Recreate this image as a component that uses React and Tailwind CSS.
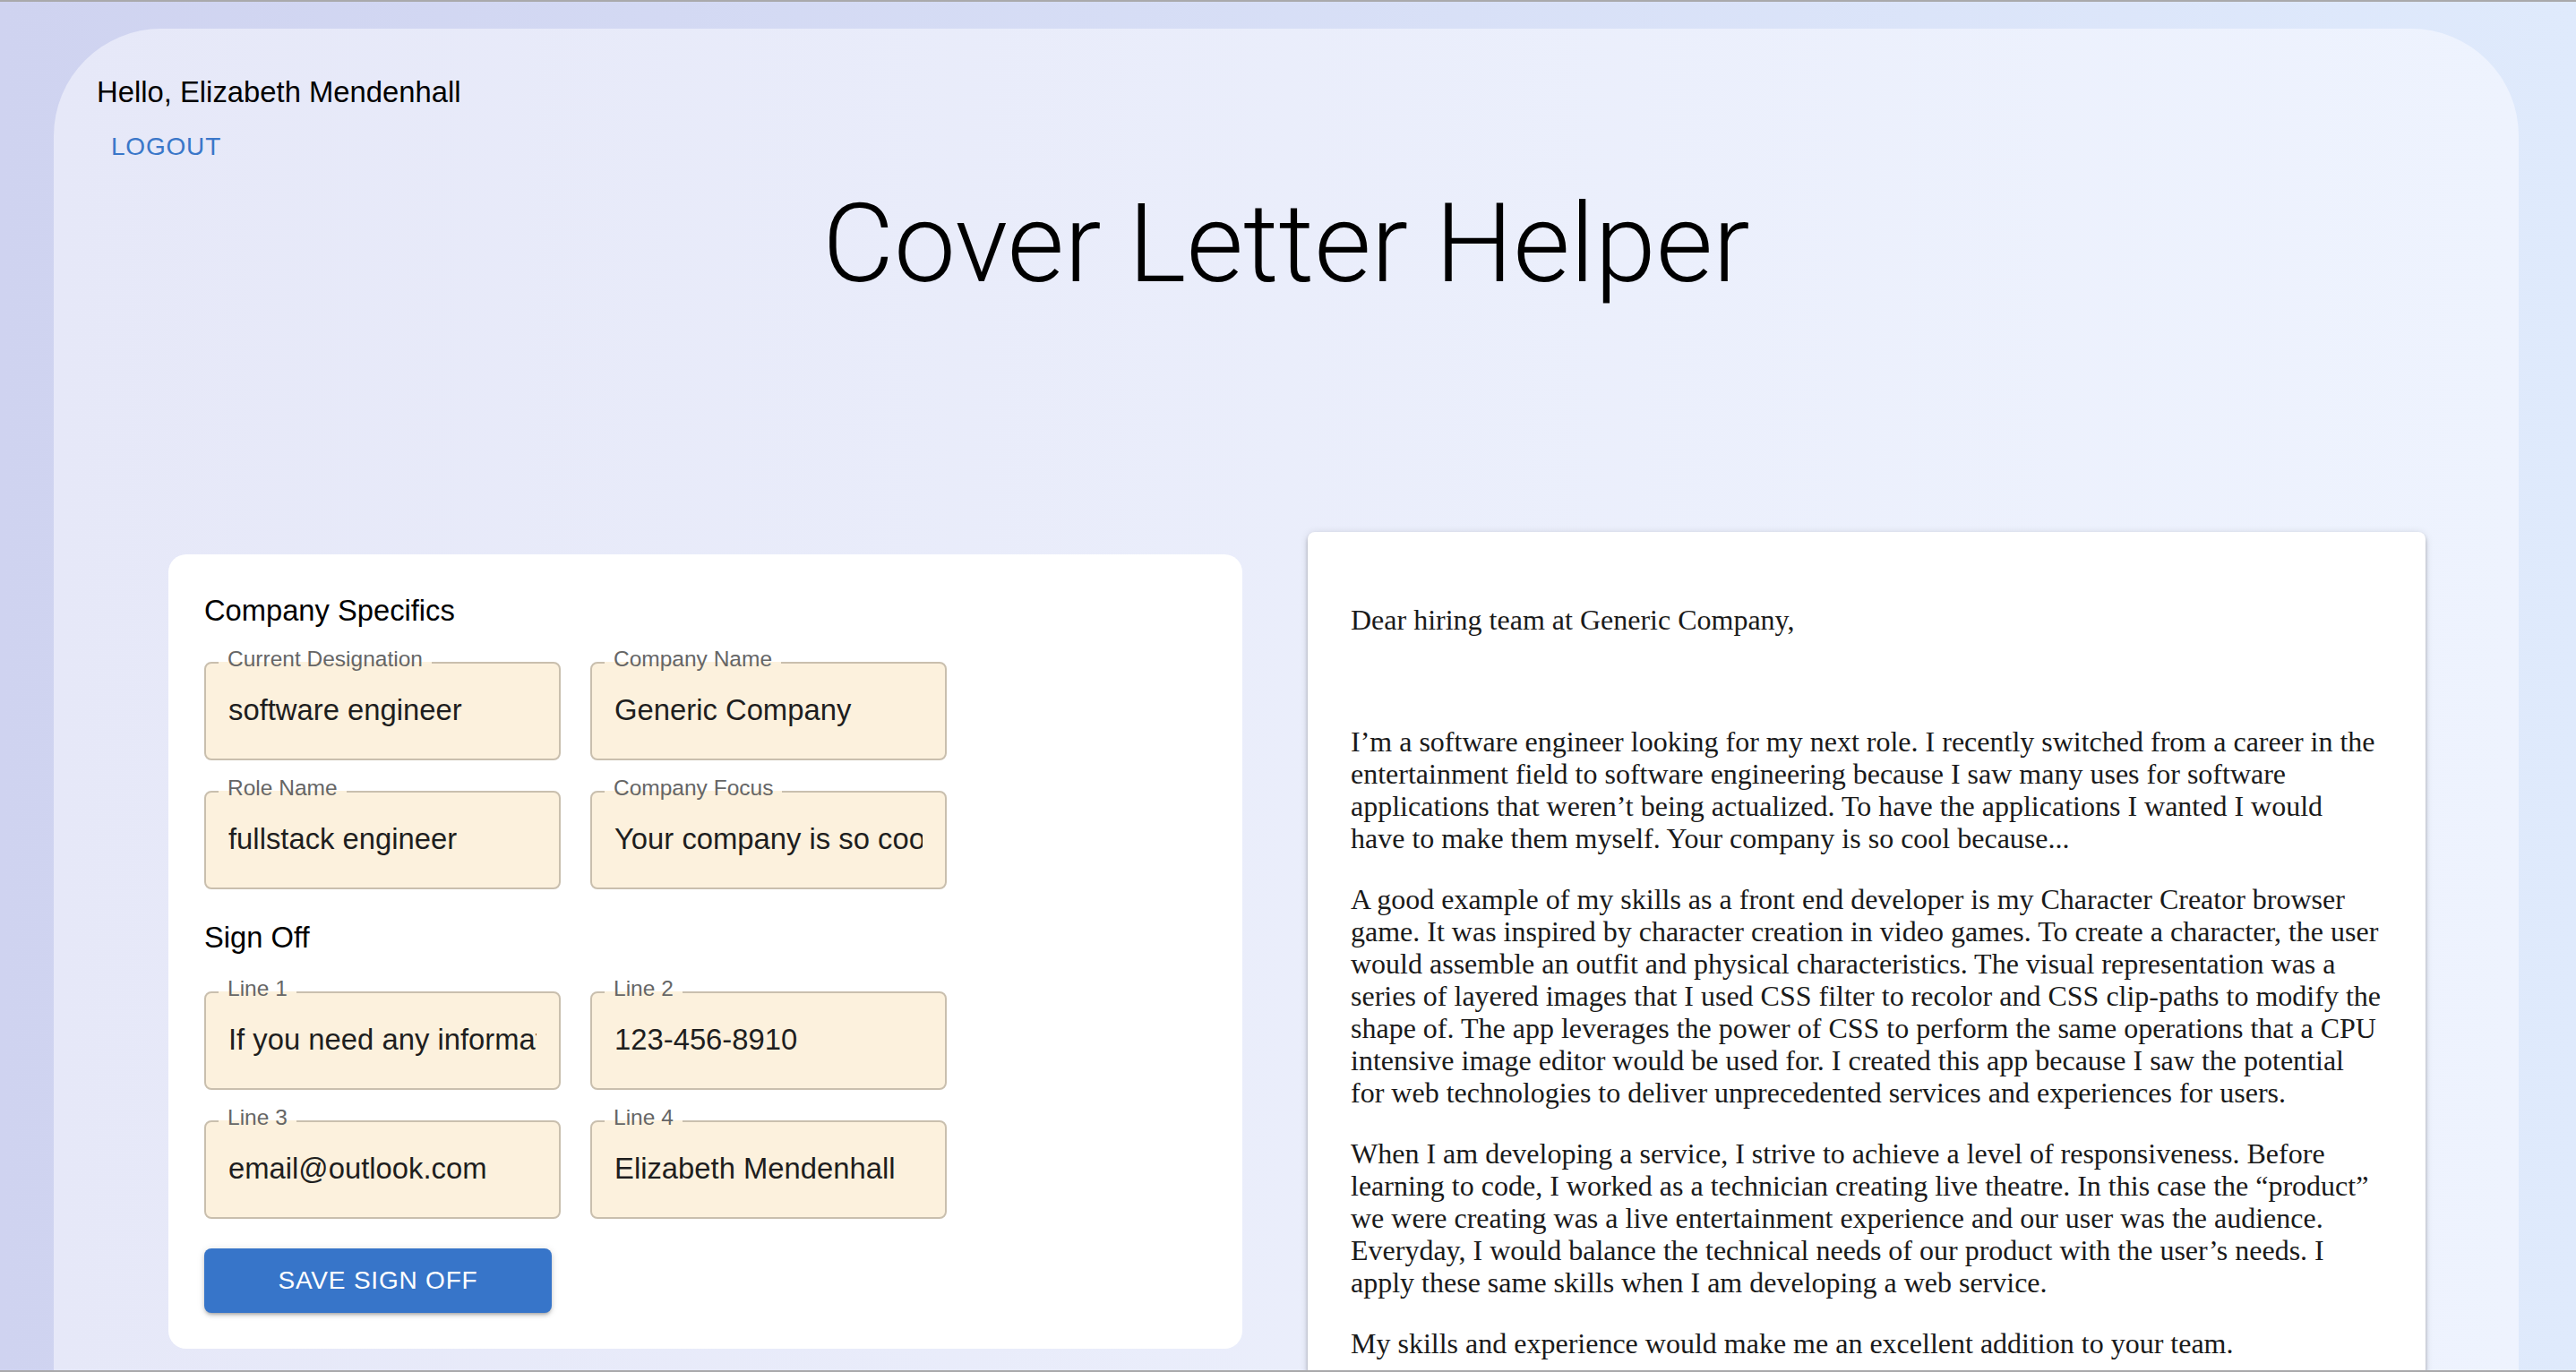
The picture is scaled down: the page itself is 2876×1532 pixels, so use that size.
import React from "react";

const sans = { fontFamily: '"Liberation Sans", Arial, Helvetica, sans-serif' };

function Field({ label, value }) {
  return (
    <div className="relative h-[110px] w-[398px] rounded-[8px] border-2 border-[#c9bfae] bg-[#fcf1dd]">
      <div className="absolute left-[14px] top-[-2px] h-[2px] bg-[#fcf1dd] px-[10px]">
        <span className="relative top-[-15px] block whitespace-nowrap text-[24.5px] leading-[24px] text-[#666666]">
          {label}
        </span>
      </div>
      <div className="flex h-full items-center px-[25px] pb-[3px]">
        <div className="w-full overflow-hidden whitespace-nowrap text-[32.8px] leading-[48px] text-[#1e1e1e]">
          {value}
        </div>
      </div>
    </div>
  );
}

export default function App() {
  return (
    <div
      style={sans}
      className="flex h-[1532px] w-full flex-col overflow-hidden border-y-2 border-[#a9a9ab] bg-[linear-gradient(to_right,#cfd3f0,#dfeafc)] pl-[60px] pr-[64px] pt-[30px]"
    >
      <div className="flex flex-1 flex-col rounded-t-[120px] bg-[linear-gradient(to_right,#e6e8f8,#eef3fe)] px-[48px] pt-[47px]">
        <div className="text-[32.8px] leading-[48px] text-black">Hello, Elizabeth Mendenhall</div>
        <div className="flex">
          <button className="px-[16px] py-[12px] text-[28px] leading-[49px] tracking-[0.8px] text-[#3a77c9]">
            LOGOUT
          </button>
        </div>
        <h1
          style={{ fontFamily: 'Roboto, "Liberation Sans", sans-serif' }}
          className="text-center text-[123px] font-light leading-[144px] text-black"
        >
          Cover Letter Helper
        </h1>

        <div className="ml-[80px] mt-[250px] flex flex-1 items-start gap-[73px]">
          <div className="mt-[25px] w-[1199px] rounded-[20px] bg-white px-[40px] pb-[40px] pt-[39px]">
            <div className="text-[32.7px] leading-[48px] text-black">Company Specifics</div>
            <div className="mt-[33px] grid grid-cols-[398px_398px] gap-x-[33px] gap-y-[34px]">
              <Field label="Current Designation" value="software engineer" />
              <Field label="Company Name" value="Generic Company" />
              <Field label="Role Name" value="fullstack engineer" />
              <Field label="Company Focus" value="Your company is so cool because..." />
            </div>
            <div className="mt-[30px] text-[32.7px] leading-[48px] text-black">Sign Off</div>
            <div className="mt-[36px] grid grid-cols-[398px_398px] gap-x-[33px] gap-y-[34px]">
              <Field label="Line 1" value="If you need any information, please reach me at" />
              <Field label="Line 2" value="123-456-8910" />
              <Field label="Line 3" value="email@outlook.com" />
              <Field label="Line 4" value="Elizabeth Mendenhall" />
            </div>
            <button className="mt-[33px] flex h-[72px] w-[388px] items-center justify-center rounded-[8px] bg-[#3775c9] text-[28px] font-medium tracking-[0.8px] text-white shadow-[0_3px_3px_-2px_rgba(0,0,0,0.2),0_3px_4px_0_rgba(0,0,0,0.14),0_1px_8px_0_rgba(0,0,0,0.12)]">
              SAVE SIGN OFF
            </button>
          </div>

          <div
            style={{ fontFamily: '"Liberation Serif", "Times New Roman", serif' }}
            className="min-h-[1100px] w-[1248px] rounded-[8px] bg-white px-[48px] pt-[48px] text-[32px] leading-[36px] text-[#1a1a1a] shadow-[0_2px_4px_-1px_rgba(0,0,0,0.2),0_4px_5px_0_rgba(0,0,0,0.14),0_1px_10px_0_rgba(0,0,0,0.12)]"
          >
            <p className="my-[32px]">Dear hiring team at Generic Company,</p>
            <p className="my-[32px]">&nbsp;</p>
            <p className="my-[32px]">
              I’m a software engineer looking for my next role. I recently switched from a career in the entertainment field to software engineering because I saw many uses for software applications that weren’t being actualized. To have the applications I wanted I would have to make them myself. Your company is so cool because...
            </p>
            <p className="my-[32px]">
              A good example of my skills as a front end developer is my Character Creator browser game. It was inspired by character creation in video games. To create a character, the user would assemble an outfit and physical characteristics. The visual representation was a series of layered images that I used CSS filter to recolor and CSS clip-paths to modify the shape of. The app leverages the power of CSS to perform the same operations that a CPU intensive image editor would be used for. I created this app because I saw the potential for web technologies to deliver unprecedented services and experiences for users.
            </p>
            <p className="my-[32px]">
              When I am developing a service, I strive to achieve a level of responsiveness. Before learning to code, I worked as a technician creating live theatre. In this case the “product” we were creating was a live entertainment experience and our user was the audience. Everyday, I would balance the technical needs of our product with the user’s needs. I apply these same skills when I am developing a web service.
            </p>
            <p className="my-[32px]">My skills and experience would make me an excellent addition to your team.</p>
          </div>
        </div>
      </div>
    </div>
  );
}
